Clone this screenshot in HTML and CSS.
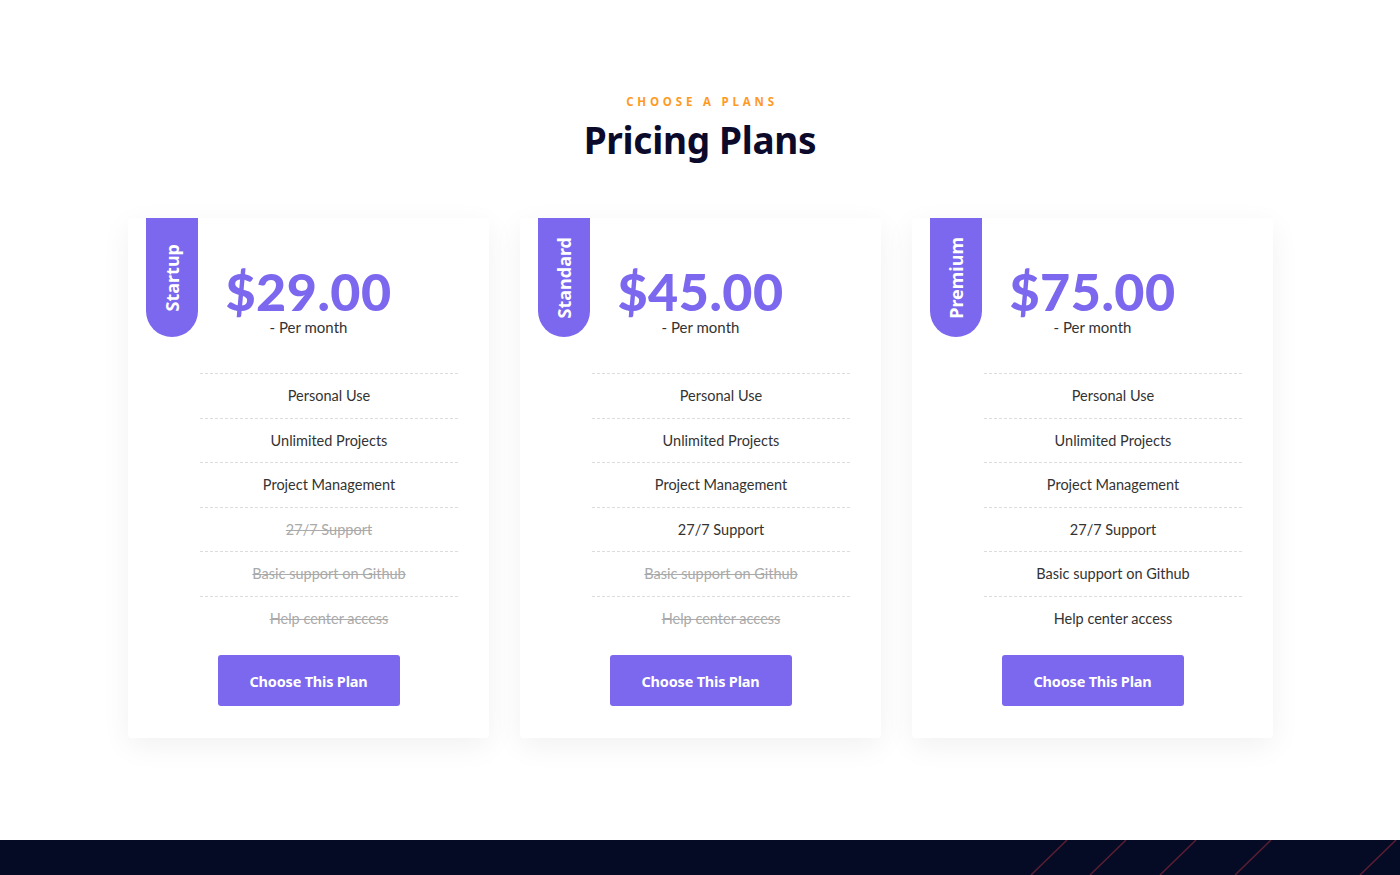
FILE: index.html
```html
<!DOCTYPE html>
<html lang="en">
<head>
<meta charset="utf-8">
<title>Pricing Plans</title>
<link rel="stylesheet" href="styles.css">
</head>
<body>
<section class="pricing">
  <div class="heading">
    <span class="sub">Choose a Plans</span>
    <h2 class="title">Pricing Plans</h2>
  </div>
  <div class="cards">
    <div class="card">
      <div class="ribbon"><span>Startup</span></div>
      <div class="price"><span class="amount">$29.00</span><span class="per">- Per month</span></div>
      <ul class="features">
        <li>Personal Use</li>
        <li>Unlimited Projects</li>
        <li>Project Management</li>
        <li class="off">27/7 Support</li>
        <li class="off">Basic support on Github</li>
        <li class="off">Help center access</li>
      </ul>
      <a class="btn" href="#">Choose This Plan</a>
    </div>
    <div class="card">
      <div class="ribbon"><span>Standard</span></div>
      <div class="price"><span class="amount">$45.00</span><span class="per">- Per month</span></div>
      <ul class="features">
        <li>Personal Use</li>
        <li>Unlimited Projects</li>
        <li>Project Management</li>
        <li>27/7 Support</li>
        <li class="off">Basic support on Github</li>
        <li class="off">Help center access</li>
      </ul>
      <a class="btn" href="#">Choose This Plan</a>
    </div>
    <div class="card">
      <div class="ribbon"><span>Premium</span></div>
      <div class="price"><span class="amount">$75.00</span><span class="per">- Per month</span></div>
      <ul class="features">
        <li>Personal Use</li>
        <li>Unlimited Projects</li>
        <li>Project Management</li>
        <li>27/7 Support</li>
        <li>Basic support on Github</li>
        <li>Help center access</li>
      </ul>
      <a class="btn" href="#">Choose This Plan</a>
    </div>
  </div>
</section>
<footer class="footer">
  <svg class="footer-lines" width="400" height="35" viewBox="0 0 400 35" aria-hidden="true">
    <g stroke="#5a1e33" stroke-width="1.5">
      <line x1="67" y1="0" x2="31" y2="35"/>
      <line x1="126" y1="0" x2="90" y2="35"/>
      <line x1="196" y1="0" x2="160" y2="35"/>
      <line x1="271" y1="0" x2="235" y2="35"/>
      <line x1="396" y1="0" x2="360" y2="35"/>
    </g>
  </svg>
</footer>
</body>
</html>
```

FILE: styles.css
```css
* { box-sizing: border-box; }
html, body { margin: 0; padding: 0; background: #fff; }
body { font-family: "Lato", "Noto Sans", sans-serif; color: #333; }

.pricing {
  height: 840px;
  padding-top: 94px;
}
.heading { text-align: center; }
.sub {
  display: block;
  font-family: "Open Sans", sans-serif;
  font-size: 11.5px;
  font-weight: 700;
  letter-spacing: 3.8px;
  text-transform: uppercase;
  color: #ff9a1f;
  line-height: 16px;
  padding-left: 4px;
}
.title {
  margin: 5px 0 0;
  font-family: "Noto Sans", sans-serif;
  font-weight: 700;
  font-size: 37px;
  line-height: 50px;
  color: #0b0a2a;
  letter-spacing: -0.3px;
}

.cards {
  display: flex;
  justify-content: center;
  gap: 31px;
  margin-top: 53px;
  padding-left: 1px;
}
.card {
  position: relative;
  width: 361px;
  background: #fff;
  border-radius: 4px;
  box-shadow: 0 8px 30px rgba(0, 0, 0, 0.06);
  padding: 48px 31px 32px;
  display: flex;
  flex-direction: column;
  align-items: center;
}
.ribbon {
  position: absolute;
  top: 0;
  left: 18px;
  width: 52px;
  height: 119px;
  background: #7b68ee;
  border-radius: 0 0 26px 26px;
  display: flex;
  align-items: center;
  justify-content: center;
}
.ribbon span {
  writing-mode: vertical-rl;
  transform: rotate(180deg);
  color: #fff;
  font-family: "Noto Sans", sans-serif;
  font-weight: 700;
  font-size: 18px;
  line-height: 1;
}
.price {
  display: flex;
  flex-direction: column;
  align-items: center;
  width: 100%;
}
.amount {
  font-family: "Lato", sans-serif;
  font-weight: 900;
  font-size: 52px;
  line-height: 50px;
  color: #7b68ee;
  letter-spacing: 0.5px;
}
.per {
  font-family: "Lato", sans-serif;
  font-size: 15px;
  line-height: 18px;
  color: #333;
  margin-top: 2px;
}
.features {
  list-style: none;
  margin: 37px 0 0;
  padding: 0 0 0 41px;
  width: 100%;
}
.features li {
  border-top: 1px dashed #ddd;
  height: 44.5px;
  line-height: 43px;
  text-align: center;
  font-family: "Lato", sans-serif;
  font-size: 14.5px;
  color: #333;
}
.features li.off {
  color: #aaa;
  text-decoration: line-through;
}
.btn {
  margin-top: 15px;
  width: 182px;
  height: 51px;
  background: #7b68ee;
  border-radius: 3px;
  color: #fff;
  text-decoration: none;
  font-family: "Noto Sans", sans-serif;
  font-weight: 700;
  font-size: 14.5px;
  display: flex;
  align-items: center;
  justify-content: center;
  letter-spacing: -0.2px;
}

.footer {
  position: relative;
  height: 35px;
  background: #050b24;
  overflow: hidden;
}
.footer-lines {
  position: absolute;
  right: 0;
  top: 0;
}
```
